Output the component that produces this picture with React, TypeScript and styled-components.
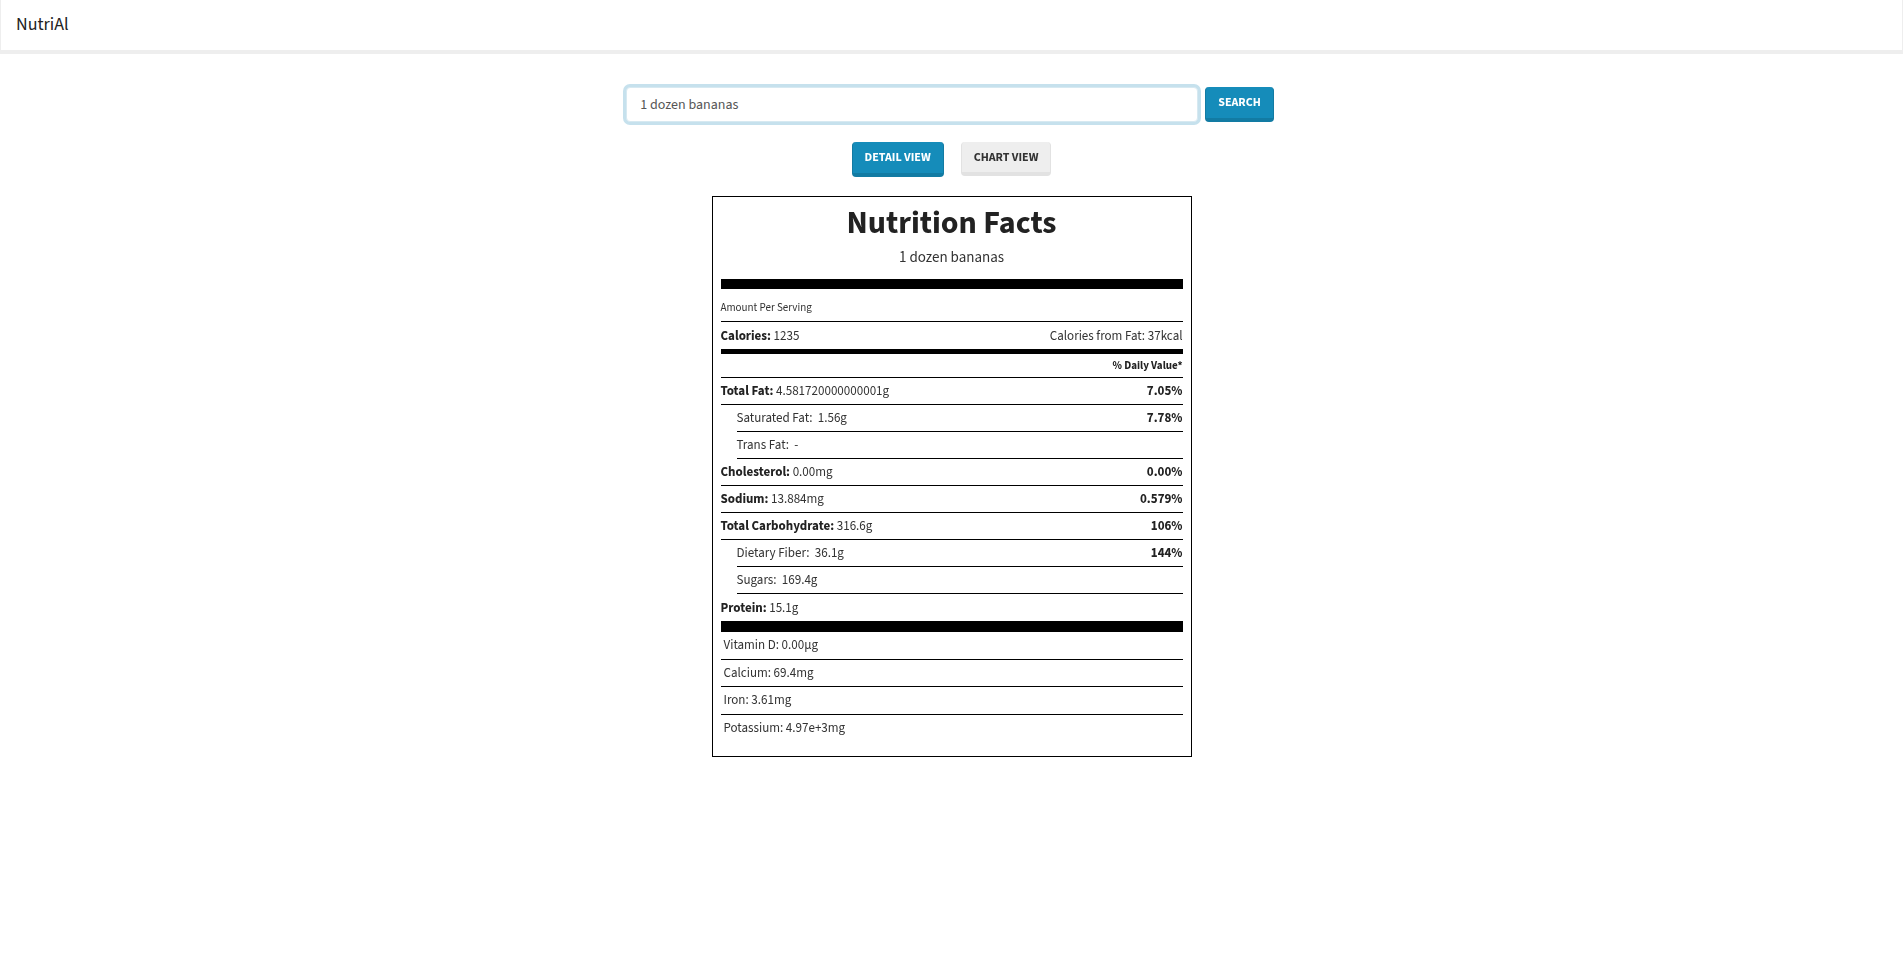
import React from "react";
import styled, { createGlobalStyle } from "styled-components";

const GlobalStyle = createGlobalStyle`
  html, body {
    margin: 0;
    padding: 0;
    background: #ffffff;
  }
  body {
    font-family: "Source Sans Pro", "Source Sans 3", Lato, "Open Sans", sans-serif;
    font-size: 14px;
    color: #222222;
  }
  * { box-sizing: border-box; }
`;

const Navbar = styled.nav`
  height: 54px;
  background: #ffffff;
  border-style: solid;
  border-color: #eeeeee;
  border-width: 0 1px 4px 1px;
  display: flex;
  align-items: center;
`;

const Brand = styled.a`
  padding: 15px 15px;
  font-size: 18px;
  line-height: 20px;
  color: #222222;
  text-decoration: none;
`;

const Main = styled.main`
  display: flex;
  flex-direction: column;
  align-items: center;
  padding-top: 33px;
`;

const SearchRow = styled.form`
  display: flex;
  align-items: flex-start;
  gap: 7px;
  margin: 0 0 0 -3px;
`;

const SearchInput = styled.input`
  width: 572px;
  height: 35px;
  padding: 6px 13px;
  font-family: inherit;
  font-size: 14px;
  color: #555555;
  background: #ffffff;
  border: 1px solid #d7e9f1;
  border-radius: 4px;
  box-shadow: 0 0 0 3px #c6e1ed;
  outline: none;
  caret-color: #333333;
`;

const Button = styled.button<{ $variant: "primary" | "default" }>`
  height: ${(p) => (p.$variant === "primary" ? "35px" : "34px")};
  padding: 0 12px;
  font-family: inherit;
  font-size: 12px;
  font-weight: 700;
  text-transform: uppercase;
  letter-spacing: 0;
  border-style: solid;
  border-width: 0 1px 4px 1px;
  border-radius: 4px;
  cursor: pointer;
  background: ${(p) => (p.$variant === "primary" ? "#158cba" : "#eeeeee")};
  border-color: ${(p) => (p.$variant === "primary" ? "#127ba3" : "#e2e2e2")};
  color: ${(p) => (p.$variant === "primary" ? "#ffffff" : "#333333")};
`;

const ViewToggle = styled.div`
  display: flex;
  gap: 17px;
  margin-top: 20px;
`;

const Label = styled.section`
  width: 480px;
  margin-top: 19px;
  border: 1px solid #000000;
  padding: 0 8px 15px;
`;

const Title = styled.h1`
  margin: 0;
  padding-top: 8px;
  text-align: center;
  font-size: 32px;
  line-height: 36px;
  font-weight: 700;
  color: #222222;
`;

const Subtitle = styled.p`
  margin: 7px 0 0;
  text-align: center;
  font-size: 15px;
  line-height: 20px;
  color: #333333;
`;

const Bar = styled.div<{ $h: number; $mt?: number }>`
  height: ${(p) => p.$h}px;
  margin-top: ${(p) => p.$mt ?? 0}px;
  background: #000000;
`;

const AmountRow = styled.div`
  padding: 12px 0 6px;
  font-size: 11px;
  line-height: 14px;
  color: #333333;
  border-bottom: 1px solid #000000;
`;

const Row = styled.div<{ $indent?: boolean; $height?: number; $noBorder?: boolean }>`
  display: flex;
  justify-content: space-between;
  align-items: center;
  height: ${(p) => p.$height ?? 27}px;
  margin-left: ${(p) => (p.$indent ? 16 : 0)}px;
  border-bottom: ${(p) => (p.$noBorder ? "none" : "1px solid #000000")};
  font-size: 13px;
  color: #333333;
`;

const DvRow = styled.div`
  height: 24px;
  display: flex;
  align-items: center;
  justify-content: flex-end;
  font-size: 11px;
  font-weight: 700;
  color: #222222;
  border-bottom: 1px solid #000000;
`;

const Strong = styled.b`
  font-weight: 700;
  color: #222222;
`;

const Percent = styled.span`
  font-weight: 700;
  color: #222222;
`;

const VitaminRow = styled.div<{ $last?: boolean }>`
  height: ${(p) => (p.$last ? 26.5 : 27.5)}px;
  display: flex;
  align-items: center;
  padding-left: 3px;
  font-size: 13px;
  color: #333333;
  border-bottom: ${(p) => (p.$last ? "none" : "1px solid #000000")};
`;

type Nutrient = {
  label: string;
  value: string;
  dv?: string;
  sub?: boolean;
  last?: boolean;
};

const nutrients: Nutrient[] = [
  { label: "Total Fat:", value: "4.581720000000001g", dv: "7.05%" },
  { label: "Saturated Fat:", value: "1.56g", dv: "7.78%", sub: true },
  { label: "Trans Fat:", value: "-", sub: true },
  { label: "Cholesterol:", value: "0.00mg", dv: "0.00%" },
  { label: "Sodium:", value: "13.884mg", dv: "0.579%" },
  { label: "Total Carbohydrate:", value: "316.6g", dv: "106%" },
  { label: "Dietary Fiber:", value: "36.1g", dv: "144%", sub: true },
  { label: "Sugars:", value: "169.4g", sub: true },
  { label: "Protein:", value: "15.1g", last: true },
];

const vitamins = [
  "Vitamin D: 0.00\u00b5g",
  "Calcium: 69.4mg",
  "Iron: 3.61mg",
  "Potassium: 4.97e+3mg",
];

export default function App() {
  return (
    <>
      <GlobalStyle />
      <Navbar>
        <Brand href="#">NutriAl</Brand>
      </Navbar>
      <Main>
        <SearchRow onSubmit={(e) => e.preventDefault()}>
          <SearchInput autoFocus defaultValue="1 dozen bananas" />
          <Button $variant="primary" type="submit">Search</Button>
        </SearchRow>
        <ViewToggle>
          <Button $variant="primary" type="button">Detail View</Button>
          <Button $variant="default" type="button">Chart View</Button>
        </ViewToggle>
        <Label>
          <Title>Nutrition Facts</Title>
          <Subtitle>1 dozen bananas</Subtitle>
          <Bar $h={10} $mt={11} />
          <AmountRow>Amount Per Serving</AmountRow>
          <Row $noBorder>
            <span>
              <Strong>Calories:</Strong> 1235
            </span>
            <span>Calories from Fat: 37kcal</span>
          </Row>
          <Bar $h={5} />
          <DvRow>% Daily Value*</DvRow>
          {nutrients.map((n) => (
            <Row key={n.label} $indent={n.sub} $noBorder={n.last}>
              <span>
                {n.sub ? (
                  <>
                    {n.label}
                    {"\u00a0 "}
                    {n.value}
                  </>
                ) : (
                  <>
                    <Strong>{n.label}</Strong> {n.value}
                  </>
                )}
              </span>
              {n.dv && <Percent>{n.dv}</Percent>}
            </Row>
          ))}
          <Bar $h={11} />
          {vitamins.map((v, i) => (
            <VitaminRow key={v} $last={i === vitamins.length - 1}>
              {v}
            </VitaminRow>
          ))}
        </Label>
      </Main>
    </>
  );
}
